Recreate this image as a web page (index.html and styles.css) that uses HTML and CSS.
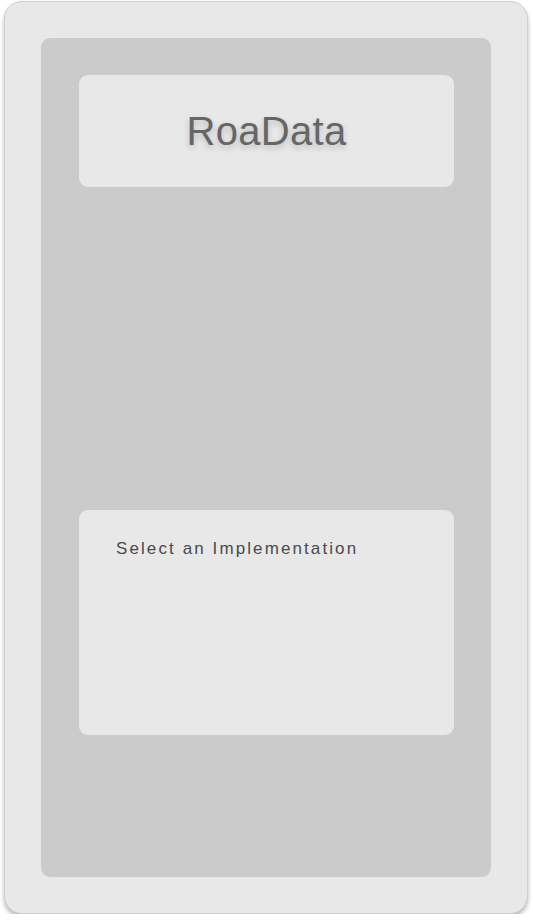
FILE: index.html
```html
<!DOCTYPE html>
<html>
<head>
<meta charset="utf-8">
<link rel="stylesheet" href="styles.css">
</head>
<body>
<div class="frame">
  <div class="screen">
    <div class="card title-card">
      <h1 class="title">RoaData</h1>
    </div>
    <div class="card select-card">
      <p class="select-label">Select an Implementation</p>
    </div>
  </div>
</div>
</body>
</html>
```
FILE: styles.css
```css
html, body {
  margin: 0;
  padding: 0;
  background: #ffffff;
}
body {
  font-family: "Liberation Sans", Arial, sans-serif;
}
.frame {
  box-sizing: border-box;
  margin: 1px 0 0 4px;
  width: 524px;
  height: 913px;
  padding: 36px;
  background: #e8e8e8;
  border: 1px solid #cfcfcf;
  border-radius: 18px;
  box-shadow: 0 3px 4px rgba(0, 0, 0, 0.28);
}
.screen {
  box-sizing: border-box;
  height: 100%;
  background: #cbcbcb;
  border-radius: 9px;
  padding: 37px 37px 0 38px;
  display: flex;
  flex-direction: column;
}
.card {
  background: #e8e8e8;
  border-radius: 9px;
}
.title-card {
  height: 112px;
  display: flex;
  align-items: center;
  justify-content: center;
}
.title {
  margin: 0;
  font-weight: normal;
  font-size: 40px;
  color: #666666;
  text-shadow: 0 3px 6px rgba(0, 0, 0, 0.2);
  letter-spacing: 0.3px;
}
.select-card {
  margin-top: 323px;
  height: 225px;
  box-sizing: border-box;
  padding: 29px 37px;
}
.select-label {
  margin: 0;
  font-size: 17px;
  color: #4a4a4a;
  letter-spacing: 2.1px;
}
```
